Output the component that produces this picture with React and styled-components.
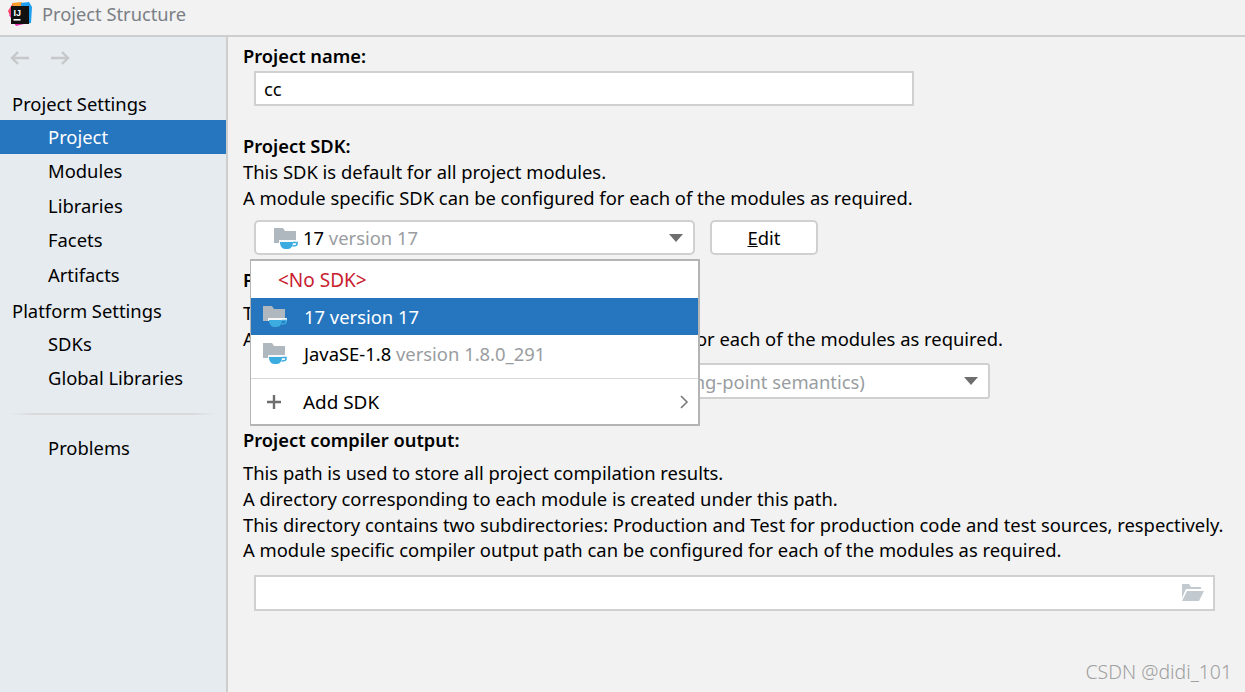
import styled, { createGlobalStyle } from "styled-components";

const Global = createGlobalStyle`
	html, body { margin: 0; padding: 0; background: #f2f2f2; }
	body { font-family: "Noto Sans", "Open Sans", sans-serif; font-size: 18.4px; color: #000; }
	* { box-sizing: border-box; }
`;

const Page = styled.div`
	position: relative;
	width: 1245px;
	height: 692px;
	overflow: hidden;
	background: #f2f2f2;
`;

const TitleBar = styled.div`
	display: flex;
	align-items: center;
	gap: 10px;
	height: 37px;
	padding: 0 0 8px 8px;
	border-bottom: 2px solid #cecece;
	font-size: 18.3px;
	color: #7a7f85;
`;

const Body = styled.div`
	display: flex;
	height: 655px;
`;

const Sidebar = styled.div`
	width: 228px;
	flex: none;
	padding-top: 7px;
	background: #e6ebf0;
	border-right: 2px solid #cecece;
`;

const NavArrows = styled.div`
	display: flex;
	gap: 18px;
	height: 28px;
	padding-left: 9px;
	align-items: center;
	margin-bottom: 16px;
`;

const NavHeader = styled.div`
	height: 32px;
	line-height: 32px;
	padding-left: 12px;
	margin-top: ${(p) => p.$top || 0}px;
`;

const NavItem = styled.div`
	height: 34.4px;
	line-height: 34px;
	padding-left: 48px;
	background: ${(p) => (p.$active ? "#2675bf" : "transparent")};
	color: ${(p) => (p.$active ? "#fff" : "#000")};
`;

const NavRule = styled.div`
	height: 2px;
	margin: 17px 10px 16px;
	background: linear-gradient(90deg, #e6ebf0, #d8d9db 12%, #d8d9db 88%, #e6ebf0);
`;

const Main = styled.div`
	flex: 1;
	padding: 6px 0 0 15px;
`;

const Label = styled.div`
	font-weight: 600;
	font-size: 18.3px;
	line-height: 26px;
	margin-top: ${(p) => p.$top || 0}px;
`;

const Text = styled.div`
	line-height: 25.6px;
	white-space: nowrap;
`;

const Field = styled.div`
	display: flex;
	align-items: center;
	height: ${(p) => p.$h || 35}px;
	width: ${(p) => p.$w}px;
	margin-left: 11px;
	margin-top: ${(p) => p.$top || 0}px;
	padding: 0 8px;
	background: #fff;
	border: 2px solid #d0d0d0;
	border-radius: ${(p) => p.$round || 0}px;
`;

const Row = styled.div`
	display: flex;
	gap: 15px;
	margin-top: ${(p) => p.$top || 0}px;
`;

const Button = styled.div`
	display: flex;
	align-items: center;
	justify-content: center;
	width: 108px;
	height: 35px;
	background: #fff;
	border: 2px solid #d0d0d0;
	border-radius: 5px;
`;

const Mnemonic = styled.span`
	text-decoration: underline;
`;

const Muted = styled.span`
	color: #999da1;
`;

const ComboText = styled.span`
	flex: 1;
	margin-left: ${(p) => p.$indent || 0}px;
	white-space: nowrap;
`;

const Caret = styled.span`
	width: 0;
	height: 0;
	margin-right: 2px;
	border-left: 7px solid transparent;
	border-right: 7px solid transparent;
	border-top: 8px solid #6e6e6e;
`;

const Spacer = styled.div`
	margin-top: ${(p) => p.$h}px;
`;

const Popup = styled.div`
	position: absolute;
	left: 250px;
	top: 259px;
	width: 450px;
	height: 167px;
	background: #fff;
	border: 2px solid #b4b4b4;
	border-left-width: 1px;
`;

const PopupRow = styled.div`
	display: flex;
	align-items: center;
	height: ${(p) => p.$h}px;
	padding-left: ${(p) => p.$pad ?? 12}px;
	padding-bottom: ${(p) => p.$bottom || 0}px;
	padding-right: ${(p) => p.$right || 0}px;
	background: ${(p) => (p.$active ? "#2675bf" : "transparent")};
	color: ${(p) => (p.$active ? "#fff" : "#000")};
	border-top: ${(p) => (p.$rule ? "1px solid #d9d9d9" : "none")};
`;

const RowText = styled.span`
	flex: 1;
	margin-left: ${(p) => p.$indent || 0}px;
	font-size: ${(p) => p.$size || 18.4}px;
	white-space: nowrap;
`;

const NoSdk = styled.span`
	color: #c8202f;
	margin-left: 15px;
	font-size: 19px;
`;

const InlineIcon = styled.span`
	display: inline-flex;
	vertical-align: -6px;
	margin-right: 5px;
`;

const Watermark = styled.div`
	position: absolute;
	right: 13px;
	bottom: 7px;
	font-size: 19.4px;
	font-weight: 300;
	color: #a0a0a0;
`;

function LogoIcon() {
	return (
		<svg width="24" height="24" viewBox="0 0 24 24">
			<polygon points="0,9 5,1 12,4 8,15 2,14" fill="#fc3f6d" />
			<polygon points="4,1 14,0 13,8 6,8" fill="#fe9c2b" />
			<polygon points="13,1 21,0 24,5 23,21 14,22" fill="#1c9ef0" />
			<polygon points="1,13 9,12 16,22 8,24" fill="#e82fb0" />
			<rect x="3" y="4" width="18" height="18" fill="#111" />
			<text x="5.5" y="13.5" fontSize="9" fontWeight="700" fill="#fff" fontFamily="Liberation Sans, sans-serif">IJ</text>
			<rect x="5.5" y="17" width="7" height="1.6" fill="#fff" />
		</svg>
	);
}

function ArrowIcon({ flip }) {
	return (
		<svg width="22" height="16" viewBox="0 0 22 16" style={flip ? { transform: "scaleX(-1)" } : undefined}>
			<path d="M9 2 L3 8 L9 14 M3 8 H20" fill="none" stroke="#c6c8ca" strokeWidth="2.4" />
		</svg>
	);
}

function SdkIcon() {
	return (
		<svg width="24" height="24" viewBox="0 0 24 24">
			<path d="M0 1 H9 L11 4 H22 V16 H0 Z" fill="#afb8bf" />
			<rect x="5" y="13" width="19" height="3" fill="#fff" fillOpacity="0.9" />
			<path d="M6 15 H19 C19 19 17 22 14 22 H11 C8 22 6 19 6 15 Z" fill="#3cabe0" />
			<path d="M19 15.5 H23 V17 C23 18 21 19 18.5 19" fill="none" stroke="#3cabe0" strokeWidth="1.6" />
		</svg>
	);
}

function FolderOpenIcon() {
	return (
		<svg width="24" height="20" viewBox="0 0 24 20">
			<path d="M1 1 H8 L10 4 H20 V6 H5 L1 15 Z" fill="#c2cad0" />
			<path d="M6 8 H23 L18 18 H1 Z" fill="#c2cad0" />
		</svg>
	);
}

function PlusIcon() {
	return (
		<svg width="16" height="16" viewBox="0 0 16 16">
			<path d="M8 1 V15 M1 8 H15" stroke="#6e6e6e" strokeWidth="2.4" />
		</svg>
	);
}

function ChevronIcon() {
	return (
		<svg width="10" height="14" viewBox="0 0 10 14">
			<path d="M2 1 L8 7 L2 13" fill="none" stroke="#7a7a7a" strokeWidth="1.6" />
		</svg>
	);
}

export default function App() {
	return (
		<Page>
			<Global />
			<TitleBar>
				<LogoIcon />
				Project Structure
			</TitleBar>
			<Body>
				<Sidebar>
					<NavArrows>
						<ArrowIcon />
						<ArrowIcon flip />
					</NavArrows>
					<NavHeader>Project Settings</NavHeader>
					<NavItem $active>Project</NavItem>
					<NavItem>Modules</NavItem>
					<NavItem>Libraries</NavItem>
					<NavItem>Facets</NavItem>
					<NavItem>Artifacts</NavItem>
					<NavHeader $top={3}>Platform Settings</NavHeader>
					<NavItem>SDKs</NavItem>
					<NavItem>Global Libraries</NavItem>
					<NavRule />
					<NavItem>Problems</NavItem>
				</Sidebar>
				<Main>
					<Label>Project name:</Label>
					<Field $w={660} $top={2}>cc</Field>
					<Label $top={27}>Project SDK:</Label>
					<Text>This SDK is default for all project modules.</Text>
					<Text>A module specific SDK can be configured for each of the modules as required.</Text>
					<Row $top={10}>
						<Field $w={441} $round={5}>
							<ComboText $indent={10}>
								<InlineIcon>
									<SdkIcon />
								</InlineIcon>
								17 <Muted>version 17</Muted>
							</ComboText>
							<Caret />
						</Field>
						<Button>
							<span>
								<Mnemonic>E</Mnemonic>dit
							</span>
						</Button>
					</Row>
					<Label $top={12}>Project language level:</Label>
					<Spacer $h={7} />
					<Text>This language level is default for all project modules.</Text>
					<Text>A module specific language level can be configured for each of the modules as required.</Text>
					<Field $w={736} $h={36} $round={3} $top={12}>
						<ComboText $indent={8}>
							<Muted>SDK default (17 - Sealed types, always-strict floating-point semantics)</Muted>
						</ComboText>
						<Caret />
					</Field>
					<Label $top={28}>Project compiler output:</Label>
					<Spacer $h={7} />
					<Text>This path is used to store all project compilation results.</Text>
					<Text>A directory corresponding to each module is created under this path.</Text>
					<Text>This directory contains two subdirectories: Production and Test for production code and test sources, respectively.</Text>
					<Text>A module specific compiler output path can be configured for each of the modules as required.</Text>
					<Field $w={961} $h={36} $top={12}>
						<ComboText />
						<FolderOpenIcon />
					</Field>
				</Main>
			</Body>
			<Popup>
				<PopupRow $h={37}>
					<NoSdk>&lt;No SDK&gt;</NoSdk>
				</PopupRow>
				<PopupRow $h={37} $active>
					<SdkIcon />
					<RowText $indent={17}>17 version 17</RowText>
				</PopupRow>
				<PopupRow $h={43} $bottom={6}>
					<SdkIcon />
					<RowText $indent={17}>
						JavaSE-1.8 <Muted>version 1.8.0_291</Muted>
					</RowText>
				</PopupRow>
				<PopupRow $h={46} $pad={15} $right={9} $rule>
					<PlusIcon />
					<RowText $indent={21} $size={18.9}>Add SDK</RowText>
					<ChevronIcon />
				</PopupRow>
			</Popup>
			<Watermark>CSDN @didi_101</Watermark>
		</Page>
	);
}
